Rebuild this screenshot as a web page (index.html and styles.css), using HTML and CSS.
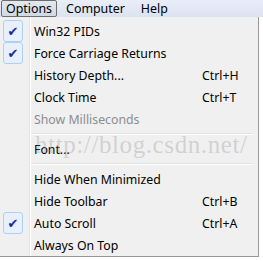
FILE: index.html
```html
<!DOCTYPE html>
<html lang="en">

<head>
    <meta charset="UTF-8">
    <title>Options menu</title>
    <link rel="stylesheet" href="styles.css">
</head>

<body>
    <div class="menubar">
        <span class="top active">Options</span>
        <span class="top">Computer</span>
        <span class="top">Help</span>
    </div>
    <ul class="menu">
        <li class="item"><span class="check">&#10004;</span><span class="label">Win32 PIDs</span><span class="key"></span></li>
        <li class="item"><span class="check">&#10004;</span><span class="label">Force Carriage Returns</span><span class="key"></span></li>
        <li class="item"><span></span><span class="label">History Depth...</span><span class="key">Ctrl+H</span></li>
        <li class="item"><span></span><span class="label">Clock Time</span><span class="key">Ctrl+T</span></li>
        <li class="item disabled"><span></span><span class="label">Show Milliseconds</span><span class="key"></span></li>
        <li class="sep"></li>
        <li class="item"><span></span><span class="label">Font...</span><span class="key"></span></li>
        <li class="sep"></li>
        <li class="item"><span></span><span class="label">Hide When Minimized</span><span class="key"></span></li>
        <li class="item"><span></span><span class="label">Hide Toolbar</span><span class="key">Ctrl+B</span></li>
        <li class="item"><span class="check">&#10004;</span><span class="label">Auto Scroll</span><span class="key">Ctrl+A</span></li>
        <li class="item"><span></span><span class="label">Always On Top</span><span class="key"></span></li>
        <li class="mark">http://blog.csdn.net/</li>
    </ul>
</body>

</html>
```

FILE: styles.css
```css
* {
    padding: 0px;
    margin: 0px;
    list-style: none;
    box-sizing: border-box;
}

body {
    background-color: #fff;
    font-family: "Noto Sans", "DejaVu Sans", sans-serif;
    font-size: 12.3px;
    color: #000;
    width: 263px;
    height: 261px;
    overflow: hidden;
}

.menubar {
    display: flex;
    height: 17px;
    background: linear-gradient(#e9eef8, #dbe3f1);
    padding-left: 1px;
    font-size: 12.4px;
}

.menubar .top {
    height: 17px;
    line-height: 15px;
    padding: 0 7px;
    border: 1px solid transparent;
}

.menubar .active {
    border-color: #6d6d6d;
    background: linear-gradient(#e3e8f0, #d2d9e4);
    border-radius: 2px;
    padding: 0 4px;
    margin-right: 1px;
}

.menu {
    position: relative;
    width: 259px;
    height: 240px;
    padding: 3px 2px 2px 2px;
    background-color: #f0f0f0;
    border-right: 1px solid #979797;
    border-bottom: 1px solid #979797;
    background-image: linear-gradient(90deg, transparent 29px, #e2e3e3 29px, #e2e3e3 30px, #fff 30px, #fff 31px, transparent 31px);
}

.menu .item {
    display: grid;
    grid-template-columns: 32px 1fr 54px;
    height: 22px;
    align-items: center;
}

.menu .check {
    display: flex;
    align-items: center;
    justify-content: center;
    width: 20px;
    height: 22px;
    margin-left: 1px;
    border: 1px solid #aecff7;
    border-radius: 3px;
    background-color: #e8f0fb;
    color: #1a2aa0;
    font-size: 13px;
}

.menu .disabled {
    color: #8d8d8d;
}

.menu .sep {
    height: 8px;
    margin-left: 29px;
    margin-right: 3px;
    border-top: 3px solid transparent;
    background: linear-gradient(#e2e3e3 1px, #fff 1px, #fff 2px, transparent 2px);
}

.menu .mark {
    position: absolute;
    left: 35px;
    top: 114px;
    font-family: "Liberation Serif", serif;
    font-size: 25px;
    letter-spacing: 0.6px;
    color: rgba(150, 150, 150, 0.35);
}
```
